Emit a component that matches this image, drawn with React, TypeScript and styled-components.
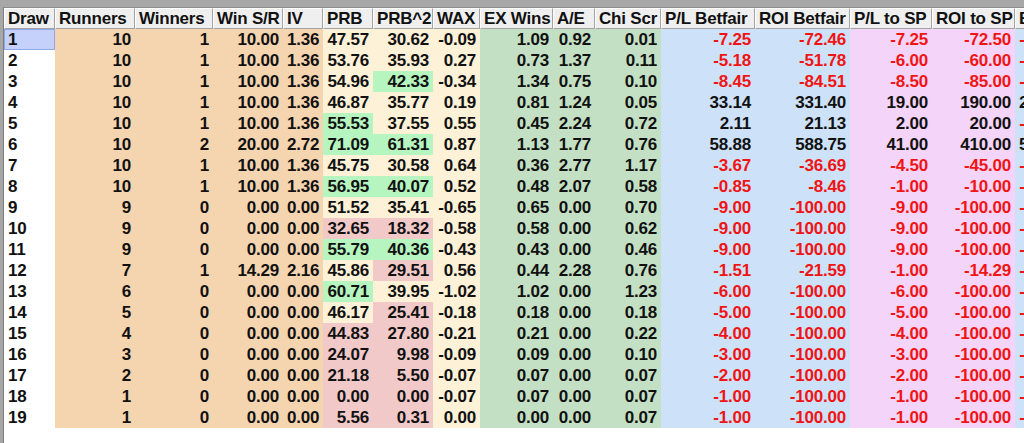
import React from "react";
import styled, { createGlobalStyle } from "styled-components";

const GlobalStyle = createGlobalStyle`
  html, body { margin: 0; padding: 0; background: #fff; overflow: hidden; }
  body { font-family: "Liberation Sans", Arial, sans-serif; }
`;

const COLS =
  "51px 80px 78px 70px 40px 50px 60px 47px 73px 42px 66px 94px 95px 82px 83px 46px";

const C = {
  white: "#ffffff",
  orange: "#f5d4b0",
  cream: "#fdf1d7",
  greenHi: "#b6f5bf",
  pinkHi: "#f1c9c9",
  greenCol: "#c4e0c4",
  blue: "#cde1f8",
  lav: "#f4d4f8",
};

const Frame = styled.div`
  width: 1024px;
  height: 443px;
  box-sizing: border-box;
  overflow: hidden;
  border-top: 7px solid #a7a7a7;
  border-left: 3px solid #a7a7a7;
  background: #fff;
`;

const Table = styled.div`
  height: 100%;
  box-sizing: border-box;
  border-left: 1px solid #7d7d7d;
  border-top: 1px solid #8c8c8c;
  font-size: 17px;
  font-weight: 700;
  letter-spacing: -0.2px;
  color: #111;
`;

const Row = styled.div`
  display: grid;
  grid-template-columns: ${COLS};
  height: 21px;
`;

const HeadCell = styled.div`
  box-sizing: border-box;
  height: 21px;
  line-height: 19px;
  padding-left: 3px;
  background: #efefef;
  border-top: 1px solid #ffffff;
  border-left: 1px solid #ffffff;
  border-right: 1px solid #a3a3a3;
  border-bottom: 1px solid #a3a3a3;
  white-space: nowrap;
  overflow: hidden;
`;

const Cell = styled.div<{ $bg: string; $red?: boolean; $left?: boolean; $selected?: boolean }>`
  box-sizing: border-box;
  height: 21px;
  line-height: 21px;
  padding: 0 4px 0 4px;
  background: ${(p) => (p.$selected ? "#c5d1fa" : p.$bg)};
  box-shadow: ${(p) => (p.$selected ? "inset 0 0 0 1px #8ea8ec" : "none")};
  color: ${(p) => (p.$red ? "#f01414" : "#111")};
  text-align: ${(p) => (p.$left ? "left" : "right")};
  white-space: nowrap;
  overflow: hidden;
`;

const headers = [
  "Draw",
  "Runners",
  "Winners",
  "Win S/R",
  "IV",
  "PRB",
  "PRB^2",
  "WAX",
  "EX Wins",
  "A/E",
  "Chi Scr",
  "P/L Betfair",
  "ROI Betfair",
  "P/L to SP",
  "ROI to SP",
  "BSP P/L",
];

type Hi = "" | "g" | "p";

// draw, runners, winners, winSR, iv, prb, prb2, wax, exw, ae, chi, plbf, roibf, plsp, roisp, extra, prbHi, prb2Hi
const data: [string[], Hi, Hi][] = [
  [["1", "10", "1", "10.00", "1.36", "47.57", "30.62", "-0.09", "1.09", "0.92", "0.01", "-7.25", "-72.46", "-7.25", "-72.50", "-7.31"], "", ""],
  [["2", "10", "1", "10.00", "1.36", "53.76", "35.93", "0.27", "0.73", "1.37", "0.11", "-5.18", "-51.78", "-6.00", "-60.00", "-5.26"], "", ""],
  [["3", "10", "1", "10.00", "1.36", "54.96", "42.33", "-0.34", "1.34", "0.75", "0.10", "-8.45", "-84.51", "-8.50", "-85.00", "-8.49"], "", "g"],
  [["4", "10", "1", "10.00", "1.36", "46.87", "35.77", "0.19", "0.81", "1.24", "0.05", "33.14", "331.40", "19.00", "190.00", "27.42"], "", ""],
  [["5", "10", "1", "10.00", "1.36", "55.53", "37.55", "0.55", "0.45", "2.24", "0.72", "2.11", "21.13", "2.00", "20.00", "-0.12"], "g", ""],
  [["6", "10", "2", "20.00", "2.72", "71.09", "61.31", "0.87", "1.13", "1.77", "0.76", "58.88", "588.75", "41.00", "410.00", "52.07"], "g", "g"],
  [["7", "10", "1", "10.00", "1.36", "45.75", "30.58", "0.64", "0.36", "2.77", "1.17", "-3.67", "-36.69", "-4.50", "-45.00", "-3.72"], "", ""],
  [["8", "10", "1", "10.00", "1.36", "56.95", "40.07", "0.52", "0.48", "2.07", "0.58", "-0.85", "-8.46", "-1.00", "-10.00", "-0.93"], "g", "g"],
  [["9", "9", "0", "0.00", "0.00", "51.52", "35.41", "-0.65", "0.65", "0.00", "0.70", "-9.00", "-100.00", "-9.00", "-100.00", "-9.00"], "", ""],
  [["10", "9", "0", "0.00", "0.00", "32.65", "18.32", "-0.58", "0.58", "0.00", "0.62", "-9.00", "-100.00", "-9.00", "-100.00", "-9.00"], "p", "p"],
  [["11", "9", "0", "0.00", "0.00", "55.79", "40.36", "-0.43", "0.43", "0.00", "0.46", "-9.00", "-100.00", "-9.00", "-100.00", "-9.00"], "g", "g"],
  [["12", "7", "1", "14.29", "2.16", "45.86", "29.51", "0.56", "0.44", "2.28", "0.76", "-1.51", "-21.59", "-1.00", "-14.29", "-1.57"], "", "p"],
  [["13", "6", "0", "0.00", "0.00", "60.71", "39.95", "-1.02", "1.02", "0.00", "1.23", "-6.00", "-100.00", "-6.00", "-100.00", "-6.00"], "g", ""],
  [["14", "5", "0", "0.00", "0.00", "46.17", "25.41", "-0.18", "0.18", "0.00", "0.18", "-5.00", "-100.00", "-5.00", "-100.00", "-5.00"], "", "p"],
  [["15", "4", "0", "0.00", "0.00", "44.83", "27.80", "-0.21", "0.21", "0.00", "0.22", "-4.00", "-100.00", "-4.00", "-100.00", "-4.00"], "p", "p"],
  [["16", "3", "0", "0.00", "0.00", "24.07", "9.98", "-0.09", "0.09", "0.00", "0.10", "-3.00", "-100.00", "-3.00", "-100.00", "-3.00"], "p", "p"],
  [["17", "2", "0", "0.00", "0.00", "21.18", "5.50", "-0.07", "0.07", "0.00", "0.07", "-2.00", "-100.00", "-2.00", "-100.00", "-2.00"], "p", "p"],
  [["18", "1", "0", "0.00", "0.00", "0.00", "0.00", "-0.07", "0.07", "0.00", "0.07", "-1.00", "-100.00", "-1.00", "-100.00", "-1.00"], "p", "p"],
  [["19", "1", "0", "0.00", "0.00", "5.56", "0.31", "0.00", "0.00", "0.00", "0.07", "-1.00", "-100.00", "-1.00", "-100.00", "-1.00"], "p", "p"],
];

const colBg = [
  C.white,
  C.orange,
  C.orange,
  C.orange,
  C.orange,
  C.cream,
  C.cream,
  C.cream,
  C.greenCol,
  C.greenCol,
  C.greenCol,
  C.blue,
  C.blue,
  C.lav,
  C.lav,
  C.blue,
];

const hiBg = (h: Hi) => (h === "g" ? C.greenHi : h === "p" ? C.pinkHi : C.cream);

export default function App() {
  return (
    <>
      <GlobalStyle />
      <Frame>
        <Table>
          <Row>
            {headers.map((h) => (
              <HeadCell key={h}>{h}</HeadCell>
            ))}
          </Row>
          {data.map(([vals, prbHi, prb2Hi], ri) => (
            <Row key={ri}>
              {vals.map((v, ci) => {
                let bg = colBg[ci];
                if (ci === 5) bg = hiBg(prbHi);
                if (ci === 6) bg = hiBg(prb2Hi);
                const red = ci >= 11 && v.startsWith("-");
                return (
                  <Cell
                    key={ci}
                    $bg={bg}
                    $red={red}
                    $left={ci === 0}
                    $selected={ri === 0 && ci === 0}
                  >
                    {v}
                  </Cell>
                );
              })}
            </Row>
          ))}
        </Table>
      </Frame>
    </>
  );
}
